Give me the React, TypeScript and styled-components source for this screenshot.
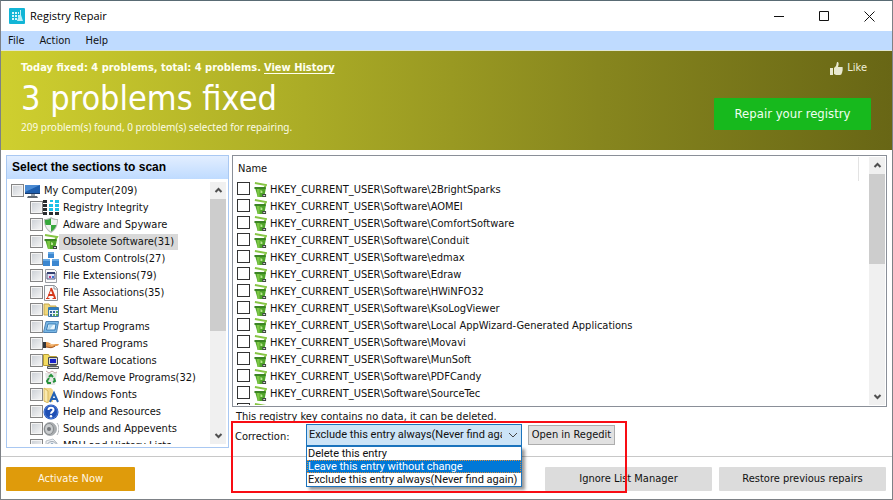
import React, { useState } from 'react';
import styled, { createGlobalStyle, css } from 'styled-components';

const uiFont = '"DejaVu Sans Condensed", "DejaVu Sans", sans-serif';

const GlobalStyle = createGlobalStyle`
  *, *::before, *::after { box-sizing: border-box; }
  html, body, #root { height: 100%; }
  body { margin: 0; background: #fff; color: #111; font: 11px/16px ${uiFont}; }
  button, input, select { font: inherit; color: inherit; margin: 0; }
  ul { list-style: none; margin: 0; padding: 0; }
`;

const Window = styled.div`
  display: flex;
  flex-direction: column;
  height: 100vh;
  min-height: 480px;
  background: #fff;
  border: 1px solid #7d8186;
  border-top-color: #596b74;
  overflow: hidden;
`;

const TitleBar = styled.header`
  display: flex;
  align-items: center;
  flex: none;
  height: 30px;
  padding-left: 8px;
`;

const Title = styled.h1`
  flex: 1;
  margin: 0;
  padding-left: 5px;
  font: 400 11px/16px "Open Sans", sans-serif;
  color: #000;
`;

const CaptionButton = styled.button`
  display: grid;
  place-items: center;
  width: 45px;
  height: 28px;
  padding: 0;
  border: 0;
  background: none;
`;

const MenuBar = styled.nav`
  display: flex;
  flex: none;
  align-items: center;
  gap: 15px;
  height: 20px;
  padding-left: 7px;
  background: #bfdbff;
  border-bottom: 1px solid #dfe6d4;
`;

const MenuItem = styled.button`
  padding: 0;
  border: 0;
  background: none;
  line-height: 16px;
`;

const Banner = styled.section`
  display: flex;
  flex: none;
  justify-content: space-between;
  height: 99px;
  padding: 8px 21px 0 20px;
  background: linear-gradient(90deg, #cfcf2f 0%, #abac26 34%, #87861e 67%, #686615 100%);
  color: #fff;
`;

const Summary = styled.div`
  white-space: nowrap;
`;

const Totals = styled.p`
  margin: 0;
  font-weight: 700;
  line-height: 18px;
  color: #fffff0;
`;

const HistoryLink = styled.a`
  margin-left: 3px;
  color: inherit;
  text-underline-offset: 2px;
`;

const Headline = styled.h2`
  margin: 0;
  font-size: 34px;
  font-weight: 400;
  line-height: 42px;
`;

const Found = styled.p`
  margin: 0;
  font: 10px/16px "Noto Sans", sans-serif;
  color: #fbfbe4;
`;

const BannerActions = styled.div`
  display: flex;
  flex-direction: column;
  align-items: flex-end;
  gap: 21px;
`;

const LikeButton = styled.button`
  display: flex;
  align-items: center;
  gap: 4px;
  padding: 0 4px 0 0;
  border: 0;
  background: none;
  line-height: 18px;
  color: #f1f1dc;
`;

const RepairButton = styled.button`
  width: 157px;
  height: 32px;
  padding: 0;
  border: 0;
  border-radius: 1px;
  background: #17b91d;
  color: #f0fff0;
  font-size: 13px;
`;

const Body = styled.main`
  display: flex;
  flex: 1;
  min-height: 0;
  gap: 3px;
  padding: 5px 5px 8px;
`;

const Sidebar = styled.aside`
  display: flex;
  flex: none;
  flex-direction: column;
  width: 223px;
  border: 1px solid #a9c8f2;
`;

const SidebarTitle = styled.h3`
  flex: none;
  margin: 0;
  padding-left: 5px;
  background: linear-gradient(#e2eeff, #bfdbff);
  font: 700 12px/23px "Liberation Sans", sans-serif;
  color: #000;
`;

const SidebarBody = styled.div`
  display: flex;
  flex: 1;
  min-height: 0;
  padding: 3px 2px;
`;

const Tree = styled.ul`
  flex: 1;
  overflow: hidden;
  padding-left: 2px;
`;

const TreeRow = styled.li<{ $child?: boolean }>`
  display: flex;
  align-items: center;
  height: 17px;
  padding-left: ${p => (p.$child ? 19 : 0)}px;
  white-space: nowrap;
`;

const TreeLabel = styled.label<{ $selected?: boolean }>`
  padding: 0 4px;
  ${p => p.$selected && css`background: #d9d9d9;`}
`;

const TreeCheck = styled.input`
  appearance: none;
  flex: none;
  width: 13px;
  height: 13px;
  border: 1px solid #858585;
  background: linear-gradient(135deg, #c9ced4, #f7f7f7);
  box-shadow: inset 0 0 0 1px #f4f4f4;
  &:checked { background: #3a78c8; }
`;

const KeyCheck = styled.input`
  appearance: none;
  flex: none;
  width: 13px;
  height: 13px;
  border: 1px solid #333;
  background: #fff;
  &:checked { background: #0078d7; }
`;

const CheckSlot = styled.span`
  display: flex;
  flex: none;
  padding-bottom: 2px;
`;

const Picture = styled.svg`
  flex: none;
  display: block;
`;

const ScrollTrack = styled.div`
  display: flex;
  flex: none;
  flex-direction: column;
  width: 16px;
  background: #f0f0f0;
`;

const ScrollButton = styled.button`
  display: grid;
  flex: none;
  place-items: center;
  height: 17px;
  padding: 0;
  border: 0;
  background: none;
`;

const ScrollSpace = styled.div`
  flex: 1;
  min-height: 0;
`;

const ScrollThumb = styled.div<{ $share: number }>`
  height: ${p => p.$share}%;
  background: #cdcdcd;
`;

const Detail = styled.section`
  display: flex;
  flex: 1;
  flex-direction: column;
  min-width: 0;
  padding-bottom: 2px;
`;

const KeyPane = styled.div`
  display: flex;
  flex: 1;
  min-height: 0;
  padding: 1px;
  border: 1px solid #8a8f98;
`;

const TableClip = styled.div`
  flex: 1;
  overflow: hidden;
  padding-right: 10px;
`;

const KeyTable = styled.table`
  width: 100%;
  border-collapse: collapse;
`;

const KeyHeading = styled.th`
  height: 24px;
  padding: 0 0 0 4px;
  border-right: 1px solid #e3e3e3;
  font-weight: 400;
  text-align: left;
`;

const KeyCell = styled.td`
  height: 17px;
  padding: 0 0 0 3px;
`;

const KeyRow = styled.div`
  display: flex;
  align-items: center;
  height: 17px;
  white-space: nowrap;
`;

const KeyLabel = styled.label`
  padding-left: 3px;
`;

const BinBox = styled.span`
  flex: none;
  padding-left: 4px;
`;

const Note = styled.p`
  flex: none;
  height: 17px;
  margin: 0;
  padding: 2px 0 0 4px;
  white-space: nowrap;
`;

const Correction = styled.div`
  position: relative;
  display: flex;
  flex: none;
  align-items: center;
  height: 22px;
  padding-left: 3px;
`;

const CorrectionLabel = styled.label`
  width: 71px;
  padding-top: 4px;
`;

const SelectBox = styled.div`
  position: relative;
  width: 216px;
  font-family: Roboto, sans-serif;
`;

const CorrectionSelect = styled.select`
  appearance: none;
  display: block;
  width: 100%;
  height: 22px;
  padding: 0 19px 0 2px;
  border: 1px solid #1c74bd;
  border-radius: 0;
  background: #cce4f7;
  line-height: 20px;
  text-overflow: clip;
`;

const Chevron = styled.span`
  position: absolute;
  top: 8px;
  right: 4px;
  pointer-events: none;
`;

const Options = styled.ul`
  position: absolute;
  z-index: 2;
  top: 100%;
  left: 0;
  width: 100%;
  border: 1px solid #1c74bd;
  background: #fff;
  box-shadow: 3px 3px 3px rgba(0, 0, 0, 0.4);
`;

const Option = styled.li<{ $active: boolean }>`
  padding-left: 1px;
  line-height: 13px;
  white-space: nowrap;
  cursor: default;
  ${p => p.$active && css`
    background: #0078d7;
    color: #fff;
    outline: 1px dotted #d98c3c;
    outline-offset: -1px;
  `}
`;

const RegeditButton = styled.button`
  width: 87px;
  height: 20px;
  margin-left: 6px;
  padding: 0;
  border: 1px solid #adadad;
  background: #e1e1e1;
  white-space: nowrap;
`;

const Highlight = styled.div`
  position: absolute;
  z-index: 3;
  top: -3px;
  left: -1px;
  width: 396px;
  height: 72px;
  border: 2px solid #f80d14;
  pointer-events: none;
`;

const Footer = styled.footer`
  display: flex;
  flex: none;
  gap: 7px;
  height: 43px;
  padding: 10px 6px 0 5px;
  border-top: 1px solid #c8c8c8;
`;

const FooterButton = styled.button<{ $primary?: boolean }>`
  width: ${p => (p.$primary ? 129 : 167)}px;
  height: 24px;
  margin-right: ${p => (p.$primary ? 'auto' : 0)};
  padding: 0;
  border: 0;
  border-radius: 1px;
  background: ${p => (p.$primary ? '#df9b0b' : '#dcdcdc')};
  color: ${p => (p.$primary ? '#fff8e6' : '#111')};
`;

const iconArt: Record<string, React.ReactNode> = {
  computer: <>
    <path d="M1 2h15v9H1z" fill="#1f5fae" /><path d="M1 2h15L1 9z" fill="#4b8bd3" />
    <path d="M1 10h15v1H1z" fill="#17396a" /><path d="M7 11h4v2H7z" fill="#99a3ad" /><path d="M4 13h9l1 2H3z" fill="#5d6670" />
  </>,
  blocks: <>
    <path d="M0 0h4v3H0zM0 4h4v3H0zM0 8h4v3H0zM0 12h4v3H0zM6 12h4v3H6zM12 12h4v3h-4z" fill="#2a2d30" />
    <path d="M6 8h4v3H6zM6 4h4v3H6zM12 8h4v3h-4zM7 0h3v2H7zM12 4h4v3h-4zM12 0h4v3h-4z" fill="#1cc3e8" />
  </>,
  shield: <>
    <path d="M8 0c2 1.500 4 2 7 2 0 7-2 11-7 14C3 13 1 9 1 2c3 0 5-.5 7-2z" fill="#b4bbb7" />
    <path d="M8 1.500c2 1 4 1.500 6 1.500 0 2-.2 3.500-.7 5H8zM2.700 8H8v6.500C5 12.800 3.500 11 2.700 8z" fill="#eef2ef" />
    <path d="M8 1.500C6 2.500 4 3 2 3c0 2 .2 3.500.7 5H8zM8 8h5.300c-.8 3-2.300 4.800-5.300 6.500z" fill="#36a83b" />
  </>,
  bin: <>
    <path d="M2 1l12 2-2 3" fill="none" stroke="#86c543" strokeWidth="2" />
    <path d="M2 5.500h12L12 15H5z" fill="#4fa52a" /><path d="M1.500 5h12v2h-12z" fill="#3c8424" /><path d="M4 7h3v8H5z" fill="#7cc644" />
    <path d="M8 8l2 1v2H8z" fill="#b9e692" /><path d="M10 12h4v3h-4z" fill="#3e4741" /><path d="M11 13h2v1h-2z" fill="#d5dcd7" />
  </>,
  cubes: <>
    <path d="M5 1h6v6H5zM0 8h7v7H0zM9 8h7v7H9z" fill="#3c87d0" />
    <path d="M5 1h6v2H5zM0 8h7v2H0zM9 8h7v2H9z" fill="#68aae5" />
  </>,
  extension: <>
    <path d="M2.500 1.500h9l2 2v11h-11z" fill="#fafafa" stroke="#9a9da3" /><path d="M4 5h8v6H4z" fill="#dfe5f6" stroke="#525a84" />
    <path d="M4 4h8v2H4z" fill="#35406f" /><path d="M6 8h2v2H6z" fill="#c0397d" /><path d="M9 8h2v2H9z" fill="#3f70d0" />
  </>,
  association: <>
    <path d="M1.500.5h10l3 3v12h-13z" fill="#fbfbfb" stroke="#8f949b" /><path d="M11 1v3h3" fill="none" stroke="#8f949b" />
    <path d="M4.500 13L8 4" fill="none" stroke="#d53a1c" /><path d="M8 3l4 10M5.500 10h5" fill="none" stroke="#d53a1c" strokeWidth="2" /><path d="M3 13.500h3.500M9.500 13.500H13" stroke="#d53a1c" />
  </>,
  startMenu: <>
    <path d="M1 2h5l1 2h6v9H1z" fill="#efd77c" stroke="#c8a94a" /><path d="M5.500 5.500h10v9h-10z" fill="#e8f2fb" stroke="#3d79a8" />
    <path d="M6 6h9v2H6z" fill="#2f7dc2" /><path d="M7 9h2v2H7zM10 9h2v2h-2zM7 12h2v2H7z" fill="#34689c" /><path d="M10 12h2v2h-2zM13 9h2v2h-2zM13 12h2v2h-2z" fill="#5aa858" />
  </>,
  startup: <>
    <path d="M3 2.500h12.500l-2 11H.5z" fill="#79b7e5" stroke="#4d82b3" /><path d="M5 5h8l-1 6H3.500z" fill="#e9f6fd" stroke="#357bb5" />
    <path d="M6 6h4l-3 4H5z" fill="#a9d5f1" />
  </>,
  hand: <>
    <path d="M0 6h3v6H0z" fill="#30343a" /><path d="M3 6c3 0 4 1 5 2h7c2 0 0 2-2 2l-5 2c-2 0-3-1-5-1z" fill="#e59a4e" />
    <path d="M5 8h8l-4 2z" fill="#f3bd82" /><path d="M3 11c3 0 5 2 9-1" fill="none" stroke="#9c5120" />
  </>,
  location: <>
    <path d="M.5 1.500h5l1 2h7v9H.5z" fill="#f3dc62" stroke="#b89e34" /><path d="M5.500 4.500h9v7h-9z" fill="#d7d9d9" stroke="#484c50" />
    <path d="M7 6h6v4H7z" fill="#1821c8" /><path d="M7 12h6v1H7z" fill="#696d70" /><path d="M4.500 13.500h11v2h-11z" fill="#d3d4d4" stroke="#51565b" />
  </>,
  recycle: <>
    <path d="M2 3h12l-2 12H4z" fill="#e4e7e5" /><path d="M3 1l3 2 3-2 3 2 2-1" stroke="#c5a6a6" fill="none" />
    <path d="M6 7l2-2 2 2M11 8l1 3-2 1M8 13H5l-1-2 2-3" fill="none" stroke="#25913a" strokeWidth="2" />
  </>,
  fonts: <>
    <path d="M1 1h7l2 2v12H1z" fill="#f2d78a" /><path d="M1 1l4 3v12l-4-2z" fill="#fae9ae" stroke="#d9b95c" />
    <path d="M7 15l4-9 4 9M8.500 12h5" fill="none" stroke="#2461b4" strokeWidth="2" />
  </>,
  help: <>
    <circle cx="8" cy="8" r="7.500" fill="#1f4fb4" /><circle cx="8" cy="8" r="6.500" fill="none" stroke="#4e7ed8" />
    <path d="M5.500 6c0-3 5-3 5 0 0 1.500-2.500 1.800-2.500 3.800" fill="none" stroke="#fff" strokeWidth="2" /><circle cx="8" cy="12.200" r="1.200" fill="#fff" />
  </>,
  speaker: <>
    <ellipse cx="7" cy="8" rx="6.500" ry="7" fill="#a7abae" /><ellipse cx="6" cy="8" rx="4.500" ry="5.500" fill="#c8cbcd" stroke="#85898c" />
    <circle cx="6" cy="8" r="2" fill="#73777b" /><path d="M12 4c2 2 2 6 0 8M14 2c3 4 2 9 0 12" fill="none" stroke="#b2b6ba" />
  </>,
  history: <>
    <path d="M3 3l7-2 4 4v10H3z" fill="#eef1f4" stroke="#bac0c6" /><circle cx="9" cy="9" r="5.500" fill="#e9eef3" stroke="#a2abb5" />
    <path d="M9 5v4l3 1" fill="none" stroke="#4b7294" />
  </>,
};

function Icon({ name }: { name: string }) {
  return <Picture width="16" height="16" viewBox="0 0 16 16" aria-hidden="true">{iconArt[name]}</Picture>;
}

function AppLogo() {
  return (
    <Picture width="16" height="16" viewBox="0 0 16 16" aria-hidden="true">
      <rect width="16" height="16" rx="1" fill="#12b5d6" />
      <path d="M3 4h2v2H3zM6 4h2v2H6zM9 4h1v2H9zM3 7h2v2H3zM6 7h2v2H6zM9 7h1v2H9zM3 10h2v2H3zM6 10h2v2H6z" fill="#d8f6fb" />
      <path d="M11 2h1v5l2 6H8l2-6h1z" fill="#bceff8" />
    </Picture>
  );
}

function Arrow({ up }: { up?: boolean }) {
  return (
    <Picture width="9" height="7" viewBox="0 0 9 7" aria-hidden="true">
      <path d={up ? 'M1.500 5L4.500 2L7.500 5' : 'M1.500 2L4.500 5L7.500 2'} fill="none" stroke="#505050" strokeWidth="2" />
    </Picture>
  );
}

function Scrollbar({ share }: { share: number }) {
  return (
    <ScrollTrack>
      <ScrollButton aria-label="Scroll up"><Arrow up /></ScrollButton>
      <ScrollSpace><ScrollThumb $share={share} /></ScrollSpace>
      <ScrollButton aria-label="Scroll down"><Arrow /></ScrollButton>
    </ScrollTrack>
  );
}

const sections: [string, string][] = [
  ['My Computer(209)', 'computer'],
  ['Registry Integrity', 'blocks'],
  ['Adware and Spyware', 'shield'],
  ['Obsolete Software(31)', 'bin'],
  ['Custom Controls(27)', 'cubes'],
  ['File Extensions(79)', 'extension'],
  ['File Associations(35)', 'association'],
  ['Start Menu', 'startMenu'],
  ['Startup Programs', 'startup'],
  ['Shared Programs', 'hand'],
  ['Software Locations', 'location'],
  ['Add/Remove Programs(32)', 'recycle'],
  ['Windows Fonts', 'fonts'],
  ['Help and Resources', 'help'],
  ['Sounds and Appevents', 'speaker'],
  ['MRU and History Lists', 'history'],
];

const keys = [
  '2BrightSparks', 'AOMEI', 'ComfortSoftware', 'Conduit', 'edmax', 'Edraw', 'HWiNFO32', 'KsoLogViewer',
  'Local AppWizard-Generated Applications', 'Movavi', 'MunSoft', 'PDFCandy', 'SourceTec',
];

const corrections = ['Delete this entry', 'Leave this entry without change', 'Exclude this entry always(Never find again)'];

function SmallBin() {
  return <Picture width="13" height="16" viewBox="1 0 14 16" preserveAspectRatio="none" aria-hidden="true">{iconArt.bin}</Picture>;
}

export default function App() {
  const [choice, setChoice] = useState(corrections[2]);
  const [active, setActive] = useState(1);

  return (
    <Window>
      <GlobalStyle />
      <TitleBar>
        <AppLogo />
        <Title>Registry Repair</Title>
        <CaptionButton aria-label="Minimize">
          <Picture width="11" height="11"><path d="M0 5.500h10" stroke="#111" /></Picture>
        </CaptionButton>
        <CaptionButton aria-label="Maximize">
          <Picture width="11" height="11"><path d="M.5.5h9v9h-9z" fill="none" stroke="#111" /></Picture>
        </CaptionButton>
        <CaptionButton aria-label="Close">
          <Picture width="11" height="11"><path d="M.5.5l10 10M10.500.5l-10 10" stroke="#111" /></Picture>
        </CaptionButton>
      </TitleBar>
      <MenuBar>
        <MenuItem>File</MenuItem>
        <MenuItem>Action</MenuItem>
        <MenuItem>Help</MenuItem>
      </MenuBar>
      <Banner>
        <Summary>
          <Totals>Today fixed: 4 problems, total: 4 problems.<HistoryLink href="#history">View History</HistoryLink></Totals>
          <Headline>3 problems fixed</Headline>
          <Found>209 problem(s) found, 0 problem(s) selected for repairing.</Found>
        </Summary>
        <BannerActions>
          <LikeButton>
            <Picture width="13" height="13" viewBox="0 0 13 13" aria-hidden="true">
              <path d="M0 6h3v7H0zM4 6l2-2 1-4c2 0 2 2 1 5h4c1 0 1 1 .5 2 .5 1 .3 1.500-.2 2 .2 1-.1 1.500-.5 2 0 1-.8 2-1.800 2H6l-2-1z" fill="#e9e9cf" />
            </Picture>
            Like
          </LikeButton>
          <RepairButton>Repair your registry</RepairButton>
        </BannerActions>
      </Banner>
      <Body>
        <Sidebar>
          <SidebarTitle>Select the sections to scan</SidebarTitle>
          <SidebarBody>
            <Tree>
              {sections.map(([label, icon], i) => (
                <TreeRow key={label} $child={i > 0}>
                  <TreeCheck type="checkbox" id={`section-${i}`} />
                  <Icon name={icon} />
                  <TreeLabel htmlFor={`section-${i}`} $selected={i === 3}>{label}</TreeLabel>
                </TreeRow>
              ))}
            </Tree>
            <Scrollbar share={58} />
          </SidebarBody>
        </Sidebar>
        <Detail>
          <KeyPane>
            <TableClip>
              <KeyTable>
                <thead><tr><KeyHeading scope="col">Name</KeyHeading></tr></thead>
                <tbody>
                  {keys.map((key, i) => (
                    <tr key={key}>
                      <KeyCell>
                        <KeyRow>
                          <CheckSlot><KeyCheck type="checkbox" id={`key-${i}`} /></CheckSlot>
                          <BinBox><SmallBin /></BinBox>
                          <KeyLabel htmlFor={`key-${i}`}>{`HKEY_CURRENT_USER\\Software\\${key}`}</KeyLabel>
                        </KeyRow>
                      </KeyCell>
                    </tr>
                  ))}
                  <tr>
                    <KeyCell>
                      <KeyRow>
                        <CheckSlot><KeyCheck type="checkbox" aria-label="Next entry" /></CheckSlot>
                        <BinBox><SmallBin /></BinBox>
                      </KeyRow>
                    </KeyCell>
                  </tr>
                </tbody>
              </KeyTable>
            </TableClip>
            <Scrollbar share={42} />
          </KeyPane>
          <Note>This registry key contains no data, it can be deleted.</Note>
          <Correction>
            <CorrectionLabel htmlFor="correction">Correction:</CorrectionLabel>
            <SelectBox>
              <CorrectionSelect id="correction" value={choice} onChange={e => setChoice(e.target.value)}>
                {corrections.map(text => <option key={text}>{text}</option>)}
              </CorrectionSelect>
              <Chevron>
                <Picture width="10" height="7"><path d="M1 1l4 4 4-4" fill="none" stroke="#444" /></Picture>
              </Chevron>
              <Options role="listbox" aria-label="Correction">
                {corrections.map((text, i) => (
                  <Option
                    key={text}
                    role="option"
                    aria-selected={i === active}
                    $active={i === active}
                    onMouseEnter={() => setActive(i)}
                    onClick={() => setChoice(text)}
                  >
                    {text}
                  </Option>
                ))}
              </Options>
            </SelectBox>
            <RegeditButton>Open in Regedit</RegeditButton>
            <Highlight />
          </Correction>
        </Detail>
      </Body>
      <Footer>
        <FooterButton $primary>Activate Now</FooterButton>
        <FooterButton>Ignore List Manager</FooterButton>
        <FooterButton>Restore previous repairs</FooterButton>
      </Footer>
    </Window>
  );
}
